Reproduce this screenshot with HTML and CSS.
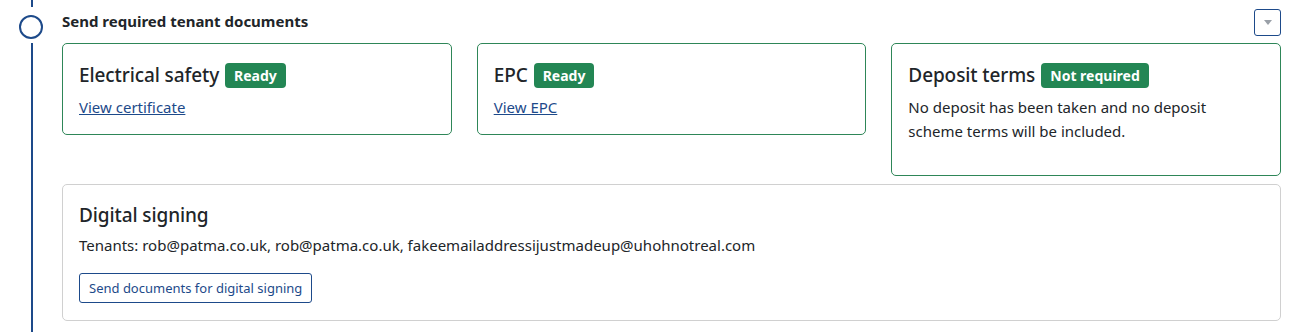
FILE: index.html
```html
<!DOCTYPE html>
<html lang="en">
<head>
<meta charset="utf-8">
<link rel="stylesheet" href="styles.css">
</head>
<body>
<div class="step">
  <div class="rail">
    <div class="line line-top"></div>
    <div class="circle"></div>
    <div class="line line-bottom"></div>
  </div>
  <div class="content">
    <div class="head">
      <h2 class="title">Send required tenant documents</h2>
      <button class="toggle" aria-label="Toggle"><span class="tri"></span></button>
    </div>
    <div class="cards">
      <div class="card ok">
        <h3 class="card-title">Electrical safety <span class="badge">Ready</span></h3>
        <a class="link" href="#">View certificate</a>
      </div>
      <div class="card ok">
        <h3 class="card-title">EPC <span class="badge">Ready</span></h3>
        <a class="link" href="#">View EPC</a>
      </div>
      <div class="card ok tall">
        <h3 class="card-title">Deposit terms <span class="badge">Not required</span></h3>
        <p class="text">No deposit has been taken and no deposit scheme terms will be included.</p>
      </div>
    </div>
    <div class="card plain">
      <h3 class="card-title">Digital signing</h3>
      <p class="text tenants">Tenants: rob@patma.co.uk, rob@patma.co.uk, fakeemailaddressijustmadeup@uhohnotreal.com</p>
      <div><button class="btn">Send documents for digital signing</button></div>
    </div>
  </div>
</div>
</body>
</html>
```
FILE: styles.css
```css
html, body {
  margin: 0;
  padding: 0;
  background: #fff;
}
body {
  font-family: "Noto Sans", "Open Sans", sans-serif;
  color: #212529;
  width: 1306px;
  height: 332px;
  overflow: hidden;
}
.step {
  display: flex;
  height: 332px;
}
.rail {
  width: 62px;
  flex: none;
  display: flex;
  flex-direction: column;
  align-items: flex-start;
}
.line {
  width: 2px;
  background: #1d4a8a;
  margin-left: 31px;
}
.line-top { height: 7px; }
.line-bottom { flex: 1; }
.circle {
  width: 20px;
  height: 20px;
  border: 2px solid #1d4a8a;
  border-radius: 50%;
  margin: 8px 0 4px 19px;
}
.content {
  flex: 1;
  padding-right: 25px;
  display: flex;
  flex-direction: column;
}
.head {
  display: flex;
  justify-content: space-between;
  align-items: flex-start;
  height: 43px;
}
.title {
  margin: 11px 0 0;
  font-size: 15px;
  font-weight: 700;
  line-height: 20px;
}
.toggle {
  margin-top: 9px;
  width: 27px;
  height: 27px;
  border: 1.5px solid #1d4a8a;
  border-radius: 3px;
  background: #fff;
  padding: 0;
  display: flex;
  align-items: center;
  justify-content: center;
}
.tri {
  width: 0;
  height: 0;
  border-left: 4.5px solid transparent;
  border-right: 4.5px solid transparent;
  border-top: 5px solid #9aa0a8;
}
.cards {
  display: flex;
  align-items: flex-start;
  gap: 25px;
}
.card {
  box-sizing: border-box;
  border-radius: 5px;
  padding: 18px 16px 16px;
  background: #fff;
}
.card.ok {
  flex: 1;
  border: 1px solid #2e8658;
  height: 92px;
}
.card.ok.tall { height: 133px; }
.card.plain {
  border: 1px solid #d0d0d0;
  margin-top: 8px;
  height: 137px;
  padding-top: 17px;
}
.card-title {
  margin: 0;
  font-size: 19px;
  font-weight: 500;
  line-height: 26px;
  display: flex;
  align-items: center;
  gap: 6px;
  letter-spacing: -0.1px;
}
.badge {
  background: #238654;
  color: #fff;
  font-size: 14px;
  font-weight: 700;
  line-height: 21px;
  padding: 2px 9px;
  border-radius: 4px;
  letter-spacing: 0;
}
.link {
  display: inline-block;
  margin-top: 9px;
  font-size: 15px;
  line-height: 20px;
  color: #1d4a8a;
  text-decoration: underline;
}
.text {
  margin: 7px 0 0;
  font-size: 15px;
  line-height: 24px;
  max-width: 340px;
}
.tenants {
  max-width: none;
  margin-top: 5px;
}
.btn {
  margin-top: 16px;
  font-family: inherit;
  font-size: 13px;
  line-height: 18px;
  color: #1d4a8a;
  background: #fff;
  border: 1px solid #1d4a8a;
  border-radius: 3px;
  padding: 5px 9px;
}
```
